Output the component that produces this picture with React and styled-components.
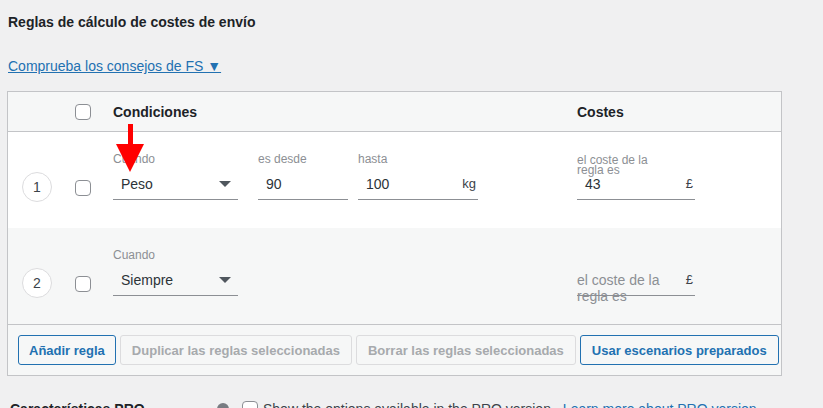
import React from 'react'
import styled, { createGlobalStyle } from 'styled-components'

const GlobalStyle = createGlobalStyle`
html, body {
  margin: 0;
  padding: 0;
  background: #f0f0f1;
  overflow: hidden;
  font-family: "Liberation Sans", Arial, sans-serif;
  color: #1d2327;
}
`;

const Page = styled.div`
  position: relative;
  padding: 12px 0 0 7px;
  width: 775px;
`;

const Title = styled.h2`
  margin: 0 0 0 1px;
  font-size: 14px;
  line-height: 20px;
  font-weight: 700;
  color: #1d2327;
`;

const TipsLink = styled.a`
  display: inline-block;
  margin: 24px 0 0 1px;
  font-size: 14px;
  line-height: 20px;
  color: #2271b1;
  text-decoration: underline;
`;

const Table = styled.div`
  margin-top: 15px;
  border: 1px solid #c3c4c7;
  background: #fff;
`;

const Grid = styled.div`
  display: grid;
  grid-template-columns: 52px 53px 464px 1fr;
`;

const Head = styled(Grid)`
  height: 39px;
  align-items: center;
  background: #f6f7f7;
  border-bottom: 1px solid #c3c4c7;
`;

const HeadTitle = styled.div`
  font-size: 14px;
  font-weight: 700;
  color: #1d2327;
`;

const Row = styled(Grid)`
  align-items: end;
  padding: 20px 0 28px;
  background: ${p => (p.$alt ? '#f6f7f7' : '#fff')};
`;

const NumberCell = styled.div`
  padding-left: 14px;
  margin-bottom: -2px;
`;

const Circle = styled.div`
  width: 28px;
  height: 28px;
  border: 1px solid #dcdcde;
  border-radius: 50%;
  display: flex;
  align-items: center;
  justify-content: center;
  font-size: 14px;
  color: #3c434a;
  background: #fff;
`;

const CheckCell = styled.div`
  padding-left: 15px;
  margin-bottom: ${p => (p.$head ? '0' : '4px')};
  display: flex;
`;

const Checkbox = styled.span`
  display: inline-block;
  flex-shrink: 0;
  width: 14px;
  height: 14px;
  border: 1px solid #8c8f94;
  border-radius: 4px;
  background: #fff;
`;

const Fields = styled.div`
  display: flex;
  align-items: flex-end;
`;

const Field = styled.div`
  width: ${p => p.$w}px;
  margin-left: ${p => p.$gap || 0}px;
`;

const Label = styled.div`
  height: 14px;
  font-size: 12px;
  line-height: 14px;
  color: #8c8f94;
  white-space: nowrap;
`;

const TwoLineLabel = styled(Label)`
  white-space: normal;
  box-sizing: border-box;
  padding-top: 3px;
  line-height: 10px;
  width: 90px;
`;

const Input = styled.div`
  box-sizing: border-box;
  height: 34px;
  padding: 10px 2px 0 ${p => (p.$flush ? 0 : 8)}px;
  display: flex;
  align-items: flex-start;
  justify-content: space-between;
  border-bottom: 1px solid #8c8f94;
  font-size: 14px;
  line-height: 16px;
  color: #2c3338;
`;

const Caret = styled.span`
  margin: 5px 5px 0 0;
  width: 0;
  height: 0;
  border-left: 6px solid transparent;
  border-right: 6px solid transparent;
  border-top: 6px solid #50575e;
`;

const Unit = styled.span`
  font-size: 13px;
  color: #3c434a;
`;

const Placeholder = styled.span`
  width: 100px;
  color: #8c8f94;
`;

const Footer = styled.div`
  display: flex;
  gap: 4px;
  padding: 10px;
  background: #f6f7f7;
  border-top: 1px solid #c3c4c7;
`;

const Button = styled.button`
  flex-shrink: 0;
  height: 30px;
  padding: 0 ${p => (p.$wide ? 11 : 10)}px;
  border-radius: 3px;
  white-space: nowrap;
  font-family: inherit;
  font-size: 13px;
  font-weight: 700;
  background: #f6f7f7;
  border: 1px solid ${p => (p.disabled ? '#dcdcde' : '#2271b1')};
  color: ${p => (p.disabled ? '#a7aaad' : '#2271b1')};
`;

const ProRow = styled.div`
  display: flex;
  align-items: center;
  margin-top: 24px;
  padding-left: 3px;
  font-size: 14px;
  line-height: 18px;
`;

const ProTitle = styled.div`
  width: 207px;
  font-weight: 700;
  color: #1d2327;
`;

const Help = styled.span`
  width: 12px;
  height: 12px;
  border-radius: 50%;
  background: #787c82;
  margin-right: 13px;
`;

const ProCheck = styled(Checkbox)`
  margin-right: 5px;
`;

const ProText = styled.span`
  color: #3c434a;
  white-space: nowrap;
`;

const ProLink = styled.a`
  margin-left: 8px;
  color: #2271b1;
  white-space: nowrap;
`;

const Arrow = styled.svg`
  position: absolute;
  left: 116px;
  top: 124px;
`;

const rows = [
  {
    n: 1,
    alt: false,
    when: 'Peso',
    from: '90',
    to: '100',
    cost: '43',
  },
  { n: 2, alt: true, when: 'Siempre' },
];

const RuleRow = ({ rule }) => (
  <Row $alt={rule.alt}>
    <NumberCell>
      <Circle>{rule.n}</Circle>
    </NumberCell>
    <CheckCell>
      <Checkbox />
    </CheckCell>
    <Fields>
      <Field $w={125}>
        <Label>Cuando</Label>
        <Input>
          <span>{rule.when}</span>
          <Caret />
        </Input>
      </Field>
      {rule.from && (
        <>
          <Field $w={90} $gap={20}>
            <Label>es desde</Label>
            <Input>
              <span>{rule.from}</span>
            </Input>
          </Field>
          <Field $w={120} $gap={10}>
            <Label>hasta</Label>
            <Input>
              <span>{rule.to}</span>
              <Unit>kg</Unit>
            </Input>
          </Field>
        </>
      )}
    </Fields>
    <Fields>
      <Field $w={118}>
        {rule.cost ? (
          <>
            <TwoLineLabel>el coste de la regla es</TwoLineLabel>
            <Input>
              <span>{rule.cost}</span>
              <Unit>£</Unit>
            </Input>
          </>
        ) : (
          <Input $flush>
            <Placeholder>el coste de la regla es</Placeholder>
            <Unit>£</Unit>
          </Input>
        )}
      </Field>
    </Fields>
  </Row>
);

export default function App() {
  return (
    <>
      <GlobalStyle />
      <Page>
        <Title>Reglas de cálculo de costes de envío</Title>
        <TipsLink href="#">Comprueba los consejos de FS ▼</TipsLink>
        <Table>
          <Head>
            <div />
            <CheckCell $head>
              <Checkbox />
            </CheckCell>
            <HeadTitle>Condiciones</HeadTitle>
            <HeadTitle>Costes</HeadTitle>
          </Head>
          {rows.map(r => (
            <RuleRow key={r.n} rule={r} />
          ))}
          <Footer>
            <Button>Añadir regla</Button>
            <Button disabled $wide>Duplicar las reglas seleccionadas</Button>
            <Button disabled $wide>Borrar las reglas seleccionadas</Button>
            <Button $wide>Usar escenarios preparados</Button>
          </Footer>
        </Table>
        <ProRow>
          <ProTitle>Características PRO</ProTitle>
          <Help />
          <ProCheck />
          <ProText>Show the options available in the PRO version.</ProText>
          <ProLink href="#">Learn more about PRO version →</ProLink>
        </ProRow>
        <Arrow width="28" height="48" viewBox="0 0 28 48">
          <rect x="12" y="0" width="5" height="22" fill="#f00" />
          <polygon points="0,20 28,20 14,48" fill="#f00" />
        </Arrow>
      </Page>
    </>
  );
}
